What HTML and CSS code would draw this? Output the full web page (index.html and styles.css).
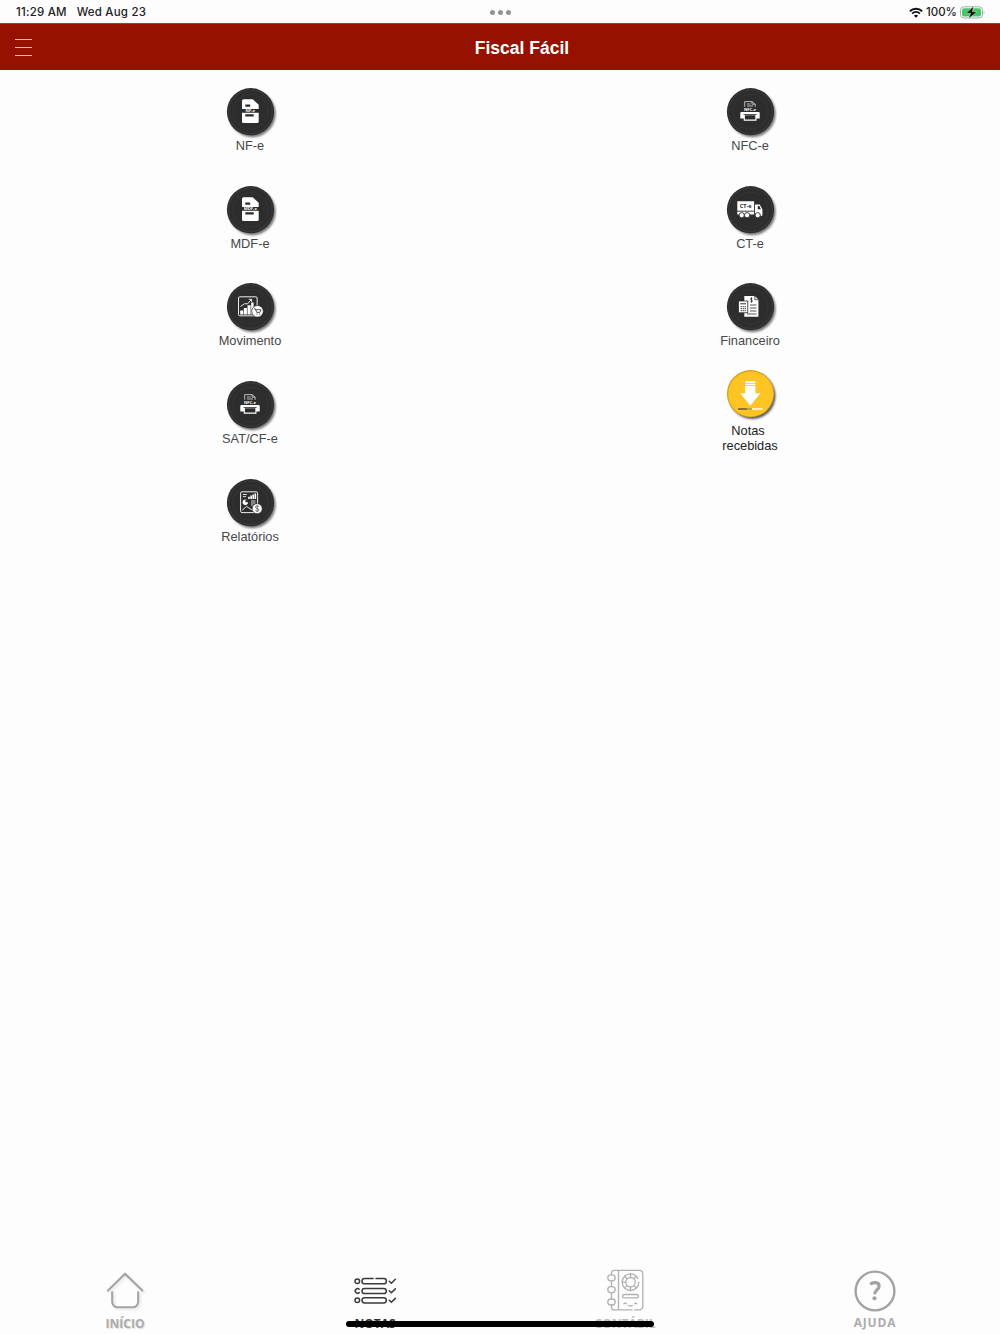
FILE: index.html
```html
<!DOCTYPE html>
<html lang="pt-BR">
<head>
<meta charset="utf-8">
<title>Fiscal Fácil</title>
<link rel="stylesheet" href="styles.css">
</head>
<body>
<svg class="defs" width="0" height="0" aria-hidden="true">
  <defs>
    <filter id="soft" x="-20%" y="-20%" width="140%" height="140%"><feGaussianBlur stdDeviation="0.8"/></filter>
    <g id="disc">
      <circle cx="29.3" cy="28.8" r="23.4" fill="#777" filter="url(#soft)"/>
      <circle cx="27.5" cy="26.7" r="23.6" fill="#2d2d2e"/>
      <circle cx="27.5" cy="26.7" r="21.8" fill="none" stroke="#373738" stroke-width="1.4"/>
      <circle cx="27.5" cy="26.7" r="17.5" fill="#2d2d2e" stroke="#353536" stroke-width="1"/>
    </g>
    <g id="doc">
      <path d="M20.5 14.3h9.2l6 5.4V36.5a1.5 1.5 0 0 1-1.5 1.5H20.5A1.5 1.5 0 0 1 19 36.5V15.8a1.5 1.5 0 0 1 1.5-1.5z" fill="#fff"/>
      <path d="M22.3 19.5h4.9v2.2h-4.9zM22.3 29.3h8.4v2.2h-8.4zM18 24h18.7v3.8H18z" fill="#2b2b2c"/>
    </g>
    <g id="printer">
      <path d="M21.7 21.8v-5.2h7.5l3 2.6v2.6M24 19h3.5M24 21h6M29 16.8v2.4h3" fill="none" stroke="#ddd" stroke-width=".8"/>
      <text x="27" y="25.8" class="glyph-text">NFC-e</text>
      <path d="M18.3 27h17.4a1 1 0 0 1 1 1v5.4H17.3V28a1 1 0 0 1 1-1z" fill="#fff"/>
      <path d="M21.3 29.8h11.6v5.3H21.3z" fill="#2b2b2c" stroke="#fff" stroke-width="1.1"/>
      <path d="M20.6 29.5h13" stroke="#2b2b2c" stroke-width=".8"/>
    </g>
  </defs>
</svg>

<div class="screen">
  <header class="status">
    <div class="status-left"><span>11:29 AM</span><span>Wed Aug 23</span></div>
    <div class="dots"><i></i><i></i><i></i></div>
    <div class="status-right">
      <svg width="14" height="11" viewBox="0 0 14 11" fill="none" stroke="#111" stroke-width="2">
        <path d="M.9 4.2a8.8 8.8 0 0 1 12.2 0M3.2 6.6a5.5 5.5 0 0 1 7.6 0"/>
        <path d="M7 10.8 4.9 8.7a3 3 0 0 1 4.2 0z" fill="#111" stroke="none"/>
      </svg>
      <span>100%</span>
      <svg class="battery" width="25" height="13" viewBox="0 0 25 13">
        <rect x=".5" y=".8" width="22" height="11.2" rx="3.4" fill="#fff" stroke="#a5aaa7"/>
        <rect x="2" y="2.3" width="19" height="8.2" rx="2" fill="#3fca66"/>
        <path d="M23.7 4.4q1.6 2 0 4z" fill="#a5aaa7"/>
        <path d="M13.5 .2 6.2 7.3h4.4L8.6 12.8 17 5.7h-4.6z" fill="#111" stroke="#fff" stroke-width=".4"/>
      </svg>
    </div>
  </header>

  <div class="titlebar">
    <div class="menu"><i></i><i></i><i></i></div>
    <h1>Fiscal Fácil</h1>
  </div>

  <main class="grid">
    <section class="column">
      <a class="item"><svg class="icon" viewBox="0 0 54 54"><use href="#disc"/><use href="#doc"/><text x="27.3" y="27.4" class="glyph-text">NF-e</text></svg><span>NF-e</span></a>
      <a class="item"><svg class="icon" viewBox="0 0 54 54"><use href="#disc"/><use href="#doc"/><text x="27.3" y="27.4" class="glyph-text">MDF-e</text></svg><span>MDF-e</span></a>
      <a class="item"><svg class="icon" viewBox="0 0 54 54"><use href="#disc"/>
        <rect x="15.5" y="16.8" width="18.6" height="19" rx="1.2" fill="none" stroke="#eee"/>
        <path d="M17.2 30.5h3v4h-3zM20.8 28h3.1v6.5h-3.1zM24.5 25.3h3.1v9.2h-3.1zM28.2 22.5h2.4v12h-2.4z" fill="#fff"/>
        <path d="M17.5 26.5l4-2.8 3 .2 3.9-4.4M25.8 19.3h2.8v2.6" fill="none" stroke="#fff" stroke-width=".9"/>
        <circle cx="34.5" cy="31.3" r="5.8" fill="#fff" stroke="#2b2b2c" stroke-width=".7"/>
        <path d="M31 28.8h1.3l1.4 3.6h3.2l1-2.7h-5" fill="none" stroke="#2b2b2c" stroke-width=".8"/>
        <circle cx="34" cy="34" r=".6" fill="#2b2b2c"/><circle cx="36.7" cy="34" r=".6" fill="#2b2b2c"/>
      </svg><span>Movimento</span></a>
      <a class="item"><svg class="icon" viewBox="0 0 54 54"><use href="#disc"/><use href="#printer"/></svg><span>SAT/CF-e</span></a>
      <a class="item"><svg class="icon" viewBox="0 0 54 54"><use href="#disc"/>
        <rect x="17.6" y="15.8" width="17" height="20.8" rx="1.4" fill="none" stroke="#eee"/>
        <path d="M19.8 18.5h4M19.8 20.6h3.2M28 25h4.5M28 27h4.5M28 29h2.5" stroke="#eee" stroke-width=".9"/>
        <path d="M25.2 20.8h1.6V23h-1.6zM27.3 19.6h1.6V23h-1.6zM29.4 18.5h1.6V23h-1.6zM31.5 17.5h1.6V23h-1.6z" fill="#fff"/>
        <circle cx="22.3" cy="26.2" r="2.7" fill="#fff"/><path d="M22.5 26.2v-2.8a2.8 2.8 0 0 1 2.8 2.8z" fill="#2b2b2c"/>
        <path d="M19.2 34.2l4.2-3.8 2.5 1.5 4.5 3" fill="none" stroke="#fff" stroke-width=".9"/>
        <circle cx="34.2" cy="32.7" r="5" fill="#fff" stroke="#2b2b2c" stroke-width=".6"/>
        <path d="M36 30.7c-2-1.2-3.8-.6-3.6.7.3 1.4 3.5.9 3.6 2.4.1 1.4-2 1.9-3.7.7M34.2 29.3v6.8" fill="none" stroke="#2b2b2c" stroke-width=".6"/>
      </svg><span>Relatórios</span></a>
    </section>

    <section class="column">
      <a class="item"><svg class="icon" viewBox="0 0 54 54"><use href="#disc"/><use href="#printer"/></svg><span>NFC-e</span></a>
      <a class="item"><svg class="icon" viewBox="0 0 54 54"><use href="#disc"/>
        <path d="M14.3 18.2h16.8v13.3H14.3zM32 21.5h4.7l2.7 4.8v6.4H32z" fill="#fff"/>
        <path d="M34.8 22.9h1.5l1.6 3.3h-3.1z" fill="#2b2b2c"/>
        <text x="22.7" y="25.2" class="glyph-text dark">CT-e</text>
        <path d="M14 28.2h17" stroke="#2b2b2c" stroke-width=".9"/>
        <g fill="#fff" stroke="#2b2b2c" stroke-width=".9"><circle cx="18.7" cy="32.2" r="2.6"/><circle cx="24.1" cy="32.2" r="2.6"/><circle cx="34.7" cy="32.2" r="2.6"/></g>
      </svg><span>CT-e</span></a>
      <a class="item"><svg class="icon" viewBox="0 0 54 54"><use href="#disc"/>
        <path d="M21.3 16h10.5l3.6 3.5v17.2H21.3z" fill="#fff"/>
        <path d="M29.3 18.5c-2-.7-2.7 1-.9 1.5s1.4 2.2-.8 1.500M28.5 17.3v5.5M27 25h6.500M27 28h6.500M27 31h6.500M24 34h9.500M31.8 16v3.700h3.500" fill="none" stroke="#2b2b2c" stroke-width=".8"/>
        <rect x="15.5" y="21" width="9.3" height="11.8" fill="#fff" stroke="#2b2b2c" stroke-width=".8"/>
        <path d="M17.3 23.8h5.6M17.6 26.7h1.3M19.6 26.7h1.3M21.6 26.7h1.3M17.6 28.7h1.3M19.6 28.7h1.3M21.6 28.7h1.3M17.6 30.7h1.3M19.6 30.7h1.3M21.6 30.7h1.3" stroke="#2b2b2c" stroke-width="1"/>
      </svg><span>Financeiro</span></a>
      <a class="item received"><svg class="icon" viewBox="0 0 54 54">
        <circle cx="29.3" cy="28.8" r="23.2" fill="#555" filter="url(#soft)"/>
        <circle cx="27.5" cy="26.7" r="23.6" fill="#d9a31c"/>
        <circle cx="27.7" cy="27" r="22.5" fill="#fdc423"/>
        <path d="M22.2 14.2h10.2v1.7H22.2zM22.2 16.7h10.2v1.4H22.2zM22.2 18.8h10.2v7.5h5L27.3 38.7 17.2 26.3h5z" fill="#fff"/>
        <path d="M15 42h9" stroke="#5d5033" stroke-width="1.4"/><path d="M24 42h5" stroke="#aa9455" stroke-width="1.4"/><path d="M29 42h10.5" stroke="#fff" stroke-width="1.4"/>
      </svg><span class="lines"><span class="first">Notas</span><span>recebidas</span></span></a>
    </section>
  </main>

  <nav class="tabs">
    <a class="tab home"><svg width="50" height="50" viewBox="0 0 50 50" fill="none" stroke-linecap="round" stroke-linejoin="round">
      <path d="M8 23.6 25 6.7l17.3 16.900M12.2 25.3v9.5a5.5 5.5 0 0 0 5.5 5.5h15a5.5 5.5 0 0 0 5.5-5.500v-9.500" stroke="#e9e9e9" stroke-width="2.5" transform="translate(1.7 1.7)" filter="url(#soft)"/>
      <path d="M8 23.6 25 6.7l17.3 16.900M12.2 25.3v9.5a5.5 5.5 0 0 0 5.5 5.5h15a5.5 5.5 0 0 0 5.5-5.500v-9.500" stroke="#a3a3a3" stroke-width="2.1"/>
    </svg><span>INÍCIO</span></a>
    <a class="tab notes"><svg width="50" height="50" viewBox="0 0 50 50" fill="none" stroke="#3a3a3a" stroke-width="1.5" stroke-linecap="round">
      <circle cx="7.3" cy="14.2" r="2.3"/><path d="M23 11.6h-8.4a2.6 2.6 0 0 0 0 5.2h19.2a2.6 2.6 0 0 0 0-5.200h-7.800M39.3 14.2l2.1 2 3.9-3.900"/>
      <path d="M9.2 22.3a2.3 2.3 0 1 0 0 3.3"/><rect x="12" y="21.4" width="24.3" height="5.2" rx="2.6"/><path d="M39.3 23.8l2.1 2 3.9-3.900"/>
      <circle cx="7.3" cy="33.3" r="2.3"/><rect x="12" y="30.7" width="24.3" height="5.2" rx="2.6"/><path d="M39.3 33.3l2.1 2 3.9-3.900"/>
    </svg><span>NOTAS</span></a>
    <a class="tab ledger"><svg width="50" height="50" viewBox="0 0 50 50" fill="none" stroke="#b1b1b1" stroke-width="1.3" stroke-linecap="round">
      <path d="M11.5 7.800V6.300a3 3 0 0 1 3-3h24.800a3.5 3.5 0 0 1 3.5 3.5v32.600a3.5 3.5 0 0 1-3.5 3.500h-4.500M32 42.900H14.500a3 3 0 0 1-3-3v-1.900M11.500 14v5.600M11.500 25.600v6.400M18.500 3.300v39.600"/>
      <rect x="7.8" y="7.8" width="7.4" height="6" rx="3"/><rect x="7.8" y="19.6" width="7.4" height="6" rx="3"/><rect x="7.8" y="32" width="7.4" height="6" rx="3"/>
      <g transform="translate(0 -.8)">
        <circle cx="30.5" cy="16" r="8.3" stroke-dasharray="48 4"/><circle cx="30.5" cy="16" r="4.7"/>
        <path d="M30.5 7.7v3.6M30.5 20.7v3.6M22.2 16h3.600M24.6 10.100l2.500 2.500M36.400 10.100l-2.500 2.500M24.600 21.900l2.500-2.500M36.400 21.900l-2.500-2.500"/>
        <rect x="22.5" y="28.300" width="16" height="3.400" rx="1.700"/><path d="M24 37.600l1.200-.8 1 .8M28.700 39.200q1.800 1.300 3.600 0M34.700 37.600l1.200-.8 1 .8"/>
      </g>
    </svg><span>CONTÁBIL</span></a>
    <a class="tab help"><svg width="50" height="50" viewBox="0 0 50 50" fill="none" stroke="#a3a3a3">
      <circle cx="25" cy="24" r="19.400" stroke-width="2.400"/>
      <path d="M20.400 17.500c2.400-2.900 8.700-2.500 8.700 1.500 0 3.800-4.500 4-4.500 8.300" stroke-width="3.200"/><circle cx="24.500" cy="31.300" r="2.100" fill="#a3a3a3" stroke="none"/>
    </svg><span>AJUDA</span></a>
    <div class="home-indicator"></div>
  </nav>
</div>
</body>
</html>
```
FILE: styles.css
```css
* { box-sizing: border-box; }
body { margin: 0; background: #fdfdfd; font-family: "Liberation Sans", Arial, sans-serif; }
.defs { position: absolute; }
.screen { width: 1000px; height: 1334px; display: flex; flex-direction: column; overflow: hidden; }

.status { height: 23px; flex: none; display: grid; grid-template-columns: 1fr auto 1fr; align-items: center; padding: 1px 15px 0; font: 500 11.5px/22px Inter, sans-serif; color: #222; }
.status-left { display: flex; gap: 10px; padding-left: 1px; letter-spacing: 0.2px; }
.dots { display: flex; gap: 3px; }
.dots i { width: 5px; height: 5px; border-radius: 50%; background: #929292; }
.status-right { display: flex; justify-content: flex-end; align-items: center; gap: 3px; }

.titlebar { height: 47px; flex: none; background: #961100; border-top: 1px solid #a63a2e; display: grid; grid-template-columns: 1fr auto 1fr; align-items: center; padding: 0 15px; }
.titlebar h1 { margin: 1px 0 0; padding-left: 44px; color: #fff; font-size: 17.5px; line-height: 22px; font-weight: 700; }
.menu { display: flex; flex-direction: column; gap: 7px; }
.menu i { width: 17px; height: 1px; background: #efb3ab; }

.grid { flex: 1; display: grid; grid-template-columns: 1fr 1fr; padding-top: 15px; }
.column { display: flex; flex-direction: column; align-items: center; }
.item { height: 97.67px; flex: none; display: flex; flex-direction: column; align-items: center; font-size: 12.8px; line-height: 14px; color: #484848; }
.icon { width: 54px; height: 54px; flex: none; }
.received { margin-top: -10.5px; color: #222; }
.lines { display: flex; flex-direction: column; align-items: center; padding-top: 1.5px; line-height: 15px; }
.first { padding-right: 4px; }
.glyph-text { font: 700 4.2px "Open Sans", sans-serif; fill: #fff; text-anchor: middle; }
.glyph-text.dark { font-size: 5.6px; fill: #2b2b2c; }

.tabs { height: 68px; flex: none; display: grid; grid-template-columns: repeat(4, 1fr); padding-top: 1px; position: relative; }
.tab { display: flex; flex-direction: column; align-items: center; color: #acacac; font: 700 12px/14px "Open Sans", sans-serif; }
.tab svg { flex: none; }
.home { text-shadow: 1px 1px 1px #ddd; }
.notes { color: #333; }
.ledger { color: #bbb; }
.help { letter-spacing: 0.8px; line-height: 12px; }
.home-indicator { position: absolute; left: 346px; top: 55px; width: 308px; height: 6px; border-radius: 3px; background: #000; }
```
